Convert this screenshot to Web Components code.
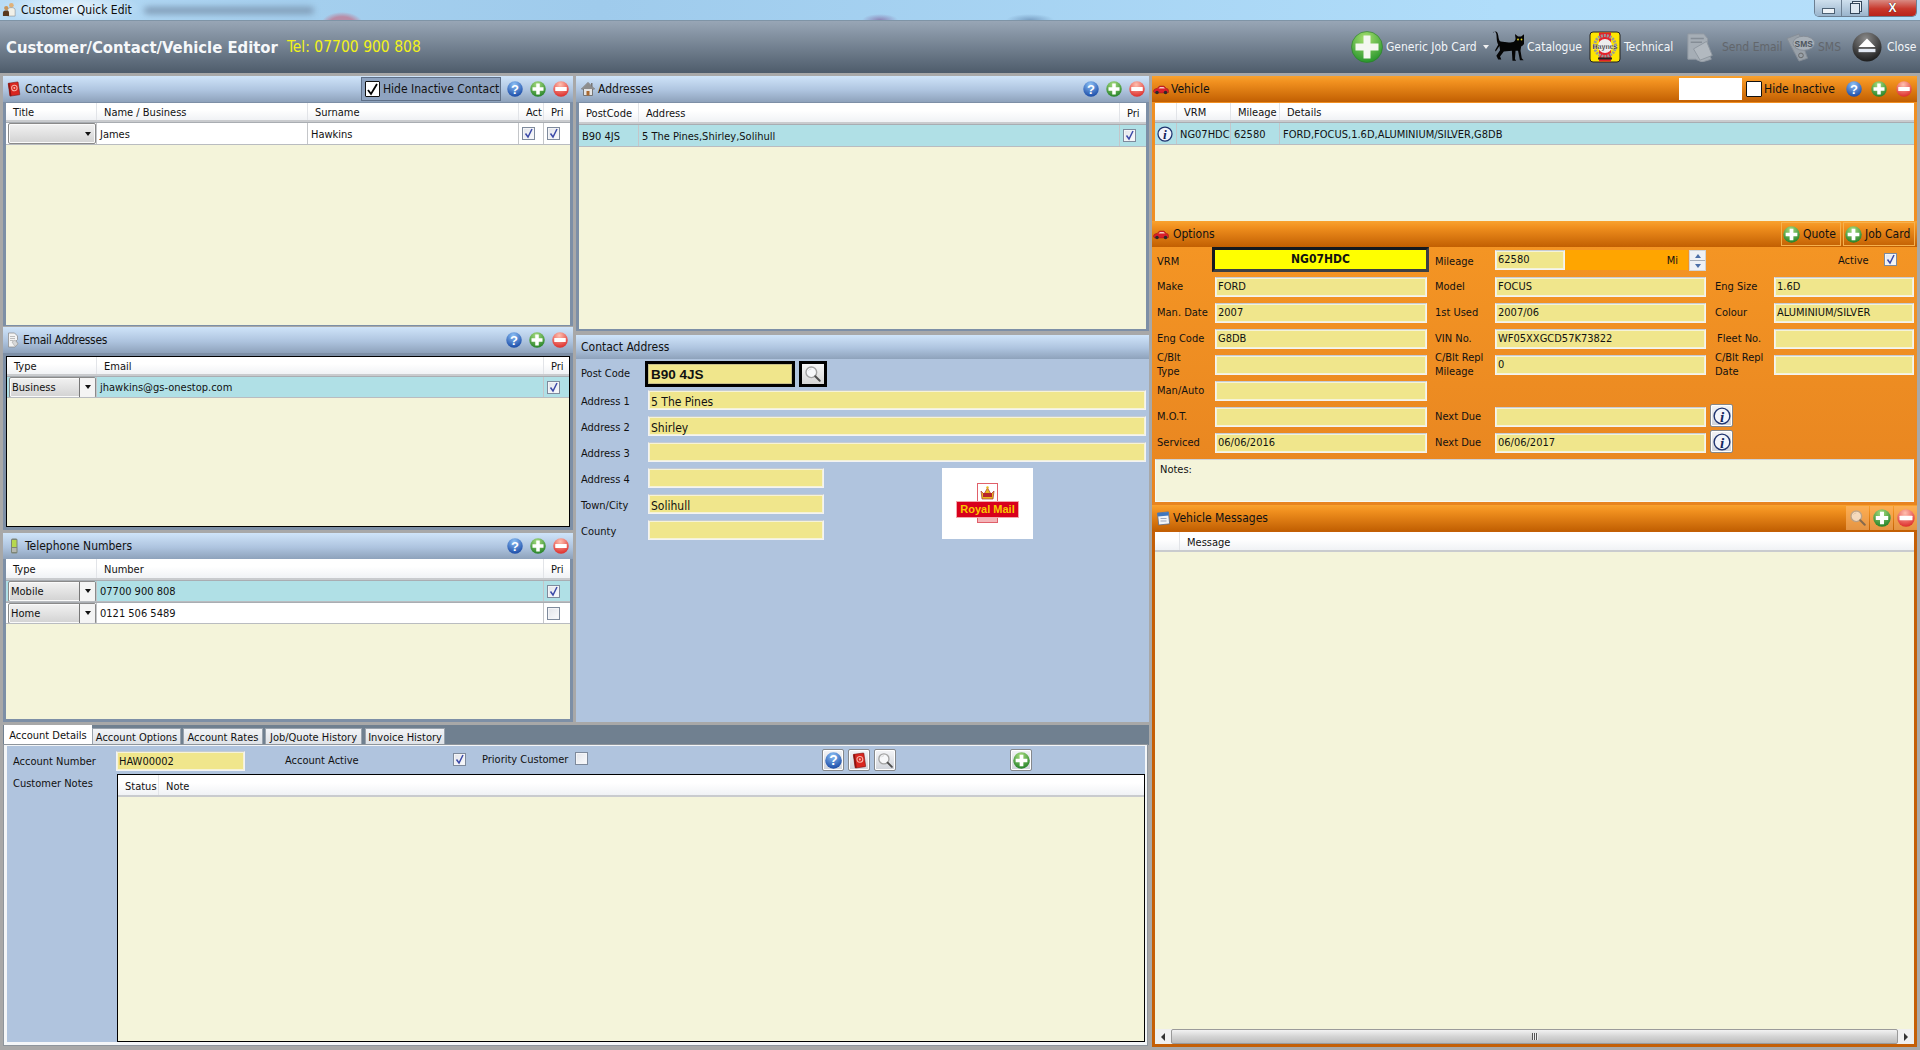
<!DOCTYPE html>
<html lang="en"><head><meta charset="utf-8"><title>Customer Quick Edit</title>
<style>
html,body{margin:0;padding:0;height:100%;overflow:hidden}
body{background:#a8a8a8;font:11px "DejaVu Sans Condensed","DejaVu Sans",sans-serif;font-stretch:condensed;color:#111}
</style></head><body>
<app-window>
  <win-titlebar heading="Customer Quick Edit"></win-titlebar>
  <app-header heading="Customer/Contact/Vehicle Editor" tel="Tel: 07700 900 808">
    <tool-item icon="bigadd" label="Generic Job Card" drop style="width:141px"></tool-item>
    <tool-item icon="cat" label="Catalogue" style="width:97px"></tool-item>
    <tool-item icon="haynes" label="Technical" style="width:97px"></tool-item>
    <tool-item icon="sendmail" label="Send Email" muted style="width:99px" gap="6"></tool-item>
    <tool-item icon="sms" label="SMS" muted style="width:67px"></tool-item>
    <tool-item icon="eject" label="Close" style="width:62px" gap="5"></tool-item>
  </app-header>
  <app-main>
    <left-block>
      <panel-stack>
        <dock-panel heading="Contacts" icon="book" title-x="3" title-gap="3" style="height:250px" pad="1px 3px 1px">
          <hide-toggle slot="actions" label="Hide Inactive Contact"></hide-toggle>
          <crud-buttons slot="actions"></crud-buttons>
          <data-grid cols="91px 211px 211px 25px 26px">
            <grid-row head><grid-cell>Title</grid-cell><grid-cell>Name / Business</grid-cell><grid-cell>Surname</grid-cell><grid-cell>Act</grid-cell><grid-cell>Pri</grid-cell></grid-row>
            <grid-row><grid-cell><combo-box></combo-box></grid-cell><grid-cell>James</grid-cell><grid-cell>Hawkins</grid-cell><grid-cell><check-box checked></check-box></grid-cell><grid-cell><check-box checked></check-box></grid-cell></grid-row>
          </data-grid>
        </dock-panel>
        <dock-panel heading="Email Addresses" icon="doc" title-x="2" title-gap="2" title-ls="-.3" style="height:203px;margin-top:1px" pad="3px 3px 3px">
          <crud-buttons slot="actions" style="margin-right:5px"></crud-buttons>
          <data-grid black cols="90px 447px 25px">
            <grid-row head><grid-cell>Type</grid-cell><grid-cell>Email</grid-cell><grid-cell>Pri</grid-cell></grid-row>
            <grid-row selected style="height:22px"><grid-cell><combo-box value="Business" split></combo-box></grid-cell><grid-cell>jhawkins@gs-onestop.com</grid-cell><grid-cell><check-box checked></check-box></grid-cell></grid-row>
          </data-grid>
        </dock-panel>
        <dock-panel heading="Telephone Numbers" icon="phone" title-x="3" title-gap="3" style="height:189px;margin-top:3px" pad="0 3px 3px">
          <crud-buttons slot="actions"></crud-buttons>
          <data-grid cols="91px 447px 26px">
            <grid-row head style="height:21px"><grid-cell>Type</grid-cell><grid-cell>Number</grid-cell><grid-cell>Pri</grid-cell></grid-row>
            <grid-row selected style="height:22px"><grid-cell><combo-box value="Mobile" split></combo-box></grid-cell><grid-cell>07700 900 808</grid-cell><grid-cell><check-box checked></check-box></grid-cell></grid-row>
            <grid-row style="height:22px"><grid-cell><combo-box value="Home" split></combo-box></grid-cell><grid-cell>0121 506 5489</grid-cell><grid-cell><check-box></check-box></grid-cell></grid-row>
          </data-grid>
        </dock-panel>
      </panel-stack>
      <panel-stack>
        <dock-panel heading="Addresses" icon="house" title-x="4" title-gap="2" style="height:255px" pad="1px 3px 2px">
          <crud-buttons slot="actions"></crud-buttons>
          <data-grid cols="60px 481px 26px">
            <grid-row head style="height:21px"><grid-cell>PostCode</grid-cell><grid-cell>Address</grid-cell><grid-cell>Pri</grid-cell></grid-row>
            <grid-row selected style="height:23px"><grid-cell>B90 4JS</grid-cell><grid-cell>5 The Pines,Shirley,Solihull</grid-cell><grid-cell><check-box checked></check-box></grid-cell></grid-row>
          </data-grid>
        </dock-panel>
        <dock-panel heading="Contact Address" style="height:387px;margin-top:4px;--body-bg:#b0c4de" pad="2px 0 0 5px" title-x="5" head-h="24">
          <form-grid cols="67px 176px 118px 91px 113px" rows="26px">
            <form-label>Post Code</form-label>
            <post-search value="B90 4JS" style="grid-column:2/6"></post-search>
          </form-grid>
          <form-grid cols="67px 176px 118px 91px 113px" style="margin-top:3px;--field-size:12px;--field-top:3px;--label-top:3px">
            <form-label>Address 1</form-label><text-field value="5 The Pines" style="grid-column:2/6"></text-field>
            <form-label>Address 2</form-label><text-field value="Shirley" style="grid-column:2/6"></text-field>
            <form-label>Address 3</form-label><text-field style="grid-column:2/6"></text-field>
            <form-label>Address 4</form-label><text-field></text-field><span></span><royal-mail style="grid-row:span 3"></royal-mail><span></span>
            <form-label>Town/City</form-label><text-field value="Solihull"></text-field><span></span><span></span>
            <form-label>County</form-label><text-field></text-field><span></span><span></span>
          </form-grid>
        </dock-panel>
      </panel-stack>
      <tab-view style="grid-column:1/3">
        <tab-item active>Account Details</tab-item>
        <tab-item style="width:89px">Account Options</tab-item>
        <tab-item style="width:80px;margin-left:2px">Account Rates</tab-item>
        <tab-item style="width:97px;margin-left:2px">Job/Quote History</tab-item>
        <tab-item style="width:80px;margin-left:3px">Invoice History</tab-item>
        <account-row slot="page">
          <form-label style="width:109px;padding-left:6px;height:20px;margin-top:1px">Account Number</form-label>
          <text-field value="HAW00002" style="width:129px;height:20px"></text-field>
          <form-label style="width:208px;padding-left:40px;height:20px">Account Active</form-label>
          <check-box checked style="margin-top:2px"></check-box>
          <form-label style="margin-left:16px;width:93px;height:18px">Priority Customer</form-label>
          <check-box style="margin-top:1px"></check-box>
          <icon-button icon="help" style="margin-left:234px"></icon-button>
          <icon-button icon="book" style="margin-left:4px"></icon-button>
          <icon-button icon="search" style="margin-left:4px"></icon-button>
          <icon-button icon="add" style="margin-left:114px"></icon-button>
        </account-row>
        <notes-row slot="page">
          <form-label style="width:110px;padding-left:6px;height:18px;margin-top:1px">Customer Notes</form-label>
          <data-grid black cols="41px 1fr">
            <grid-row head style="height:22px"><grid-cell>Status</grid-cell><grid-cell>Note</grid-cell></grid-row>
          </data-grid>
        </notes-row>
      </tab-view>
    </left-block>
    <right-block>
      <dock-panel tone="orange" heading="Vehicle" icon="car" title-x="1" title-gap="2" style="height:145px" pad="1px 3px 0">
        <blank-box slot="actions"></blank-box>
        <hide-toggle slot="actions" plain label="Hide Inactive"></hide-toggle>
        <crud-buttons slot="actions" style="gap:9px;margin:0 5px 0 11px"></crud-buttons>
        <data-grid cols="22px 54px 49px 1fr">
          <grid-row head><grid-cell></grid-cell><grid-cell>VRM</grid-cell><grid-cell>Mileage</grid-cell><grid-cell>Details</grid-cell></grid-row>
          <grid-row selected><grid-cell><ui-icon name="info" size="16" style="margin-left:-1px"></ui-icon></grid-cell><grid-cell>NG07HDC</grid-cell><grid-cell>62580</grid-cell><grid-cell>FORD,FOCUS,1.6D,ALUMINIUM/SILVER,G8DB</grid-cell></grid-row>
        </data-grid>
      </dock-panel>
      <dock-panel tone="orange" heading="Options" icon="car" title-x="1" title-gap="4" style="height:284px" pad="0 0 0 5px" flat>
        <orange-button slot="actions" label="Quote" style="width:60px"></orange-button>
        <orange-button slot="actions" label="Job Card" style="width:72px;margin:0 2px"></orange-button>
        <form-grid cols="58px 212px 68px 211px 68px 140px" rows="24px" style="--field-bot:2px">
          <form-label style="padding-top:5px">VRM</form-label><vrm-box value="NG07HDC"></vrm-box>
          <form-label style="padding:5px 0 0 8px">Mileage</form-label><mileage-field value="62580" unit="Mi"></mileage-field>
          <active-flag style="grid-column:5/7" label="Active"></active-flag>
          <form-label>Make</form-label><text-field value="FORD"></text-field><form-label style="padding-left:8px">Model</form-label><text-field value="FOCUS"></text-field><form-label style="padding-left:9px">Eng Size</form-label><text-field value="1.6D"></text-field>
          <form-label>Man. Date</form-label><text-field value="2007"></text-field><form-label style="padding-left:8px">1st Used</form-label><text-field value="2007/06"></text-field><form-label style="padding-left:9px">Colour</form-label><text-field value="ALUMINIUM/SILVER"></text-field>
          <form-label>Eng Code</form-label><text-field value="G8DB"></text-field><form-label style="padding-left:8px">VIN No.</form-label><text-field value="WF05XXGCD57K73822"></text-field><form-label style="padding-left:11px">Fleet No.</form-label><text-field></text-field>
          <form-label>C/Blt<br>Type</form-label><text-field></text-field><form-label style="padding-left:8px">C/Blt Repl<br>Mileage</form-label><text-field value="0"></text-field><form-label style="padding-left:9px">C/Blt Repl<br>Date</form-label><text-field></text-field>
          <form-label>Man/Auto</form-label><text-field></text-field><span></span><span></span><span></span><span></span>
          <form-label>M.O.T.</form-label><text-field></text-field><form-label style="padding-left:8px">Next Due</form-label><text-field></text-field><icon-button icon="info" big style="margin-left:4px"></icon-button><span></span>
          <form-label>Serviced</form-label><text-field value="06/06/2016"></text-field><form-label style="padding-left:8px">Next Due</form-label><text-field value="06/06/2017"></text-field><icon-button icon="info" big style="margin-left:4px"></icon-button><span></span>
        </form-grid>
        <notes-box>Notes:</notes-box>
      </dock-panel>
      <dock-panel tone="orange" dark heading="Vehicle Messages" icon="notes" title-x="3" title-gap="2" style="flex:1" pad="1px 3px 3px">
        <square-button slot="actions" icon="search" faded></square-button>
        <square-button slot="actions" icon="add"></square-button>
        <square-button slot="actions" icon="remove"></square-button>
        <data-grid cols="25px 1fr" style="flex:1">
          <grid-row head style="height:20px"><grid-cell></grid-cell><grid-cell>Message</grid-cell></grid-row>
          <h-scroll slot="foot"></h-scroll>
        </data-grid>
      </dock-panel>
    </right-block>
  </app-main>
</app-window>
<script>
const rg=(a,b)=>`<defs><radialGradient id="g" cx=".45" cy=".22" r=".9"><stop offset="0" stop-color="${a}"/><stop offset="1" stop-color="${b}"/></radialGradient></defs>`;
const ICONS={
add:`${rg('#a8dd80','#12751c')}<circle cx="16" cy="16" r="15.5" fill="url(#g)"/><path d="M12.5 5h7v7.5H27v7h-7.500V27h-7v-7.500H5v-7h7.500z" fill="#fff"/>`,
bigadd:`${rg('#a8e070','#148a22')}<circle cx="16" cy="16" r="15.5" fill="url(#g)" stroke="#2a7a2a" stroke-width=".6"/><path d="M12.500 4.500h7v8h8v7h-8v8h-7v-8h-8v-7h8z" fill="#f4f7f0"/>`,
remove:`${rg('#ffc0b0','#d81818')}<circle cx="16" cy="16" r="15.500" fill="url(#g)"/><rect x="4.500" y="12" width="23" height="8" rx="1" fill="#fff"/>`,
help:`${rg('#8cc0f5','#0a3a9c')}<circle cx="16" cy="16" r="15.500" fill="url(#g)"/><text x="16" y="25" font-family="Liberation Sans" font-weight="700" font-size="26" text-anchor="middle" fill="#fff">?</text>`,
info:`<circle cx="16" cy="16" r="14" fill="#f2f5fb" stroke="#1f3470" stroke-width="2.500"/><text x="16" y="26" font-family="Liberation Serif" font-style="italic" font-weight="700" font-size="27" text-anchor="middle" fill="#14265e">i</text>`,
book:`<g transform="rotate(-8 16 16)"><rect x="6" y="3" width="20" height="26" rx="1" fill="#d9261f" stroke="#6d0f0c"/><rect x="6" y="3" width="3" height="26" fill="#8e1411"/><circle cx="17" cy="14" r="5.500" fill="none" stroke="#f7b4a8" stroke-width="2"/><circle cx="17" cy="14" r="2" fill="#f7b4a8"/></g>`,
doc:`<path d="M7 2h12l6 6v7l-3 3 4 6-6 6H7z" fill="#f4f4f4" stroke="#8b8b8b" stroke-width="1.500"/><path d="M10 9h10M10 13h10M10 17h7" stroke="#aaa" stroke-width="1.500"/><path d="M14 20l6-4 6 8-6 5z" fill="#d8d8d8" stroke="#999"/>`,
phone:`<rect x="10" y="1" width="13" height="30" rx="3" fill="#7d8577"/><rect x="12" y="4" width="9" height="14" fill="#b6d84e"/><rect x="12" y="20" width="9" height="8" fill="#b5b8b0"/>`,
house:`<path d="M16 3L3 16h4v13h18V16h4z" fill="#e4e4e4" stroke="#6d6d6d" stroke-width="1.800"/><path d="M16 3L3 16h26z" fill="#8d8d8d"/><rect x="13" y="20" width="6" height="9" fill="#a9682f"/><rect x="22" y="4" width="3" height="7" fill="#777"/>`,
car:`<path d="M1 21c0-4 3-6 7-6l5-5h9l5 5c3 0 4 2 4 5v3l-3 1H3z" fill="#d9202a" stroke="#7a0e14" stroke-width=".8"/><path d="M11 15l3-3h7l3 3z" fill="#f4c8c0"/><circle cx="8" cy="23" r="3.500" fill="#2a2a2a"/><circle cx="25" cy="23" r="3.500" fill="#2a2a2a"/>`,
search:`<circle cx="13" cy="13" r="9.500" fill="#f7f8fa" stroke="#a3a3a3" stroke-width="2.500"/><path d="M8 10a6 6 0 0 1 5-3" fill="none" stroke="#ccc" stroke-width="1.500"/><path d="M20 20l8 8" stroke="#4f4f4f" stroke-width="3.500" stroke-linecap="round"/>`,
notes:`<rect x="6" y="5" width="22" height="24" fill="#f2f4f8" stroke="#55698c" stroke-width="1.500" transform="rotate(-6 16 16)"/><rect x="6" y="5" width="22" height="7" fill="#3f76bd" transform="rotate(-6 16 16)"/><path d="M11 17h12M11 22h12" stroke="#9aa7bd" stroke-width="2"/>`,
people:`<circle cx="20" cy="7" r="5" fill="#e0b27a"/><path d="M12 30V17c0-4 4-5 8-5s8 1 8 5v13z" fill="#f0f0e8" stroke="#777"/><circle cx="9" cy="13" r="4.500" fill="#c8955a"/><path d="M2 30V23c0-4 3-5 7-5s6 1 6 5v7z" fill="#5a3a20"/>`,
cat:`<path d="M2 3C6-1 9 1 10 7c.8 5 1 9 4 10 6 1 13 2 18 1 4 0 6-3 6-6l-1-7 5 4h5l5-4 1 8c1 6-2 10-6 12l-1 7 2 12 3 3h-6l-3-15-4 0-1 13 2 3h-6l-1-16-13 1-6 8 2 5h-5l-3-6 6-9-1-7-6 9-1-2 5-9c-3-6-2-10-3-17-.5-3-2-5-5-3z" fill="#050505" transform="scale(.62 .62)"/><circle cx="26" cy="8.500" r=".9" fill="#e6d820"/><circle cx="29.500" cy="8.500" r=".9" fill="#e6d820"/>`,
haynes:`<rect x="1" y="1" width="30" height="30" rx="3" fill="#ffe600" stroke="#222" stroke-width="1"/><rect x="10" y="1.500" width="12" height="29" fill="#e4232b"/><circle cx="16" cy="15" r="10.500" fill="none" stroke="#9a9a9a" stroke-width="3" stroke-dasharray="2 1"/><circle cx="16" cy="15" r="7" fill="#eee"/><text x="16" y="17.500" font-family="Liberation Sans" font-weight="700" font-size="8" text-anchor="middle" textLength="25" lengthAdjust="spacingAndGlyphs" fill="#000" stroke="#fff" stroke-width=".25">Haynes</text><rect x="9" y="26.500" width="14" height="2" fill="#222"/>`,
sendmail:`<path d="M2 2h17l4 5v14l4 8-10 3-7-3H2z" fill="#a6aeb6" stroke="#929aa3"/><path d="M5 7h14M5 11h12" stroke="#858d96" stroke-width="1.500"/><path d="M8 18l14-8 6 15-13 5z" fill="#b2b9c0" stroke="#8e969f"/>`,
sms:`<path d="M2 7l13-5 9 26-9 3z" fill="#98a0a8" stroke="#858d96"/><circle cx="17" cy="25" r="2.500" fill="none" stroke="#666"/><ellipse cx="20" cy="12" rx="11.500" ry="7.500" fill="#a8b0b8" stroke="#858d96"/><text x="20" y="15.500" font-family="Liberation Sans" font-weight="700" font-size="9" text-anchor="middle" fill="#4c545c">SMS</text>`,
eject:`${rg('#8a8a8a','#0c0c0c')}<circle cx="16" cy="16" r="15.500" fill="url(#g)"/><path d="M16 7l9 9H7z" fill="#fff"/><rect x="7" y="18" width="18" height="3.500" fill="#e4eaf4"/>`
};
const ce=(tag,render)=>customElements.define(tag,class extends HTMLElement{
  connectedCallback(){ if(this.shadowRoot) return; this.attachShadow({mode:'open'}).innerHTML=render(this,(a,d='')=>this.hasAttribute(a)?this.getAttribute(a):d); }
});
ce('ui-icon',(e,a)=>`<style>:host{display:inline-flex;flex:none;width:${a('size',16)}px;height:${a('size',16)}px}svg{display:block;width:100%;height:100%}</style><svg viewBox="0 0 32 32" aria-hidden="true">${ICONS[a('name')]||''}</svg>`);
ce('app-window',()=>`<style>:host{display:flex;flex-direction:column;width:1920px;height:1050px;overflow:hidden}</style><slot></slot>`);
ce('win-titlebar',(e,a)=>`<style>:host{display:flex;align-items:flex-start;height:20px;border-bottom:1px solid #7f94a6;overflow:hidden;background:
 radial-gradient(ellipse 70px 18px at 70px 8px,rgba(255,255,255,.75),transparent),
 radial-gradient(ellipse 21px 12px at 342px 24px,#b98ca6 60%,transparent 100%),
 radial-gradient(ellipse 18px 6px at 880px 20px,#8d84b4,transparent),radial-gradient(ellipse 24px 6px at 1030px 20px,#7aa0c4,transparent),
 linear-gradient(90deg,#b8dcf6 0,#a4cfee 300px,#9fcbec 600px,#b0ddfa 1500px,#b6dffa 100%)}
 .ic{margin:2px 4px 0 2px}.t{font-size:12px;line-height:20px;color:#0b0b0b}
 .blur{flex:none;width:170px;height:7px;margin:7px 0 0 12px;border-radius:4px;background:#7f9ab5;filter:blur(3px)}
 .ctl{margin-left:auto;margin-right:3px;display:flex;width:103px;height:17px;border:1px solid #6c7f92;border-top:0;border-radius:0 0 5px 5px;box-sizing:border-box;overflow:hidden}
 .b{flex:1;display:flex;align-items:center;justify-content:center;background:linear-gradient(#cfe0ee,#9ab4cc);border-right:1px solid #6c7f92;color:#223}
 .x{flex:none;width:47px;background:linear-gradient(#d98a82 0,#c8382c 55%,#b8241c);border:0;color:#fff}
 .min{width:11px;height:4px;border:1px solid #4d6174;background:#eef3f8;margin-top:5px}.max{width:8px;height:9px;border:1px solid #33465a;box-shadow:2px -2px 0 -1px #eef3f8,2px -2px 0 0 #33465a;background:#dde8f2}
 .xg{font:700 12px "Liberation Sans",sans-serif;text-shadow:0 0 1px #000}</style>
 <ui-icon class="ic" name="people" size="15"></ui-icon><span class="t">${a('heading')}</span><span class="blur"></span>
 <div class="ctl"><div class="b"><i class="min"></i></div><div class="b"><i class="max"></i></div><div class="b x"><span class="xg">X</span></div></div>`);
ce('app-header',(e,a)=>`<style>:host{display:flex;align-items:center;height:52px;padding:0 6px;background:linear-gradient(#98a6b6,#4e5c6b)}
 .h{font-size:16.500px;font-weight:700;color:#f6f8fa}.tel{font-size:15.500px;color:#f2f21a;margin-left:9px}
 .bar{margin-left:auto;display:flex;height:100%;align-items:center}</style>
 <span class="h">${a('heading')}</span><span class="tel">${a('tel')}</span><div class="bar"><slot></slot></div>`);
ce('tool-item',(e,a)=>`<style>:host{display:flex;align-items:center;flex:none;box-sizing:border-box;height:32px;color:${e.hasAttribute('muted')?'#62666b':'#f2f5f8'};font-size:12px;white-space:nowrap}
 .l{margin-left:${a('gap',3)}px}.ar{width:0;height:0;border:3px solid transparent;border-top:4px solid #f0f0f0;border-bottom:0;margin-left:6px}</style>
 <ui-icon name="${a('icon')}" size="${['sendmail','sms','eject'].includes(a('icon'))?30:32}"></ui-icon><span class="l">${a('label')}</span>${e.hasAttribute('drop')?'<span class="ar"></span>':''}`);
ce('app-main',()=>`<style>:host{flex:1;display:grid;grid-template-columns:1146px 765px;column-gap:3px;padding:3px 3px 3px;min-height:0}</style><slot></slot>`);
ce('left-block',()=>`<style>:host{display:grid;grid-template-columns:570px 573px;grid-template-rows:646px 321px;gap:3px}</style><slot></slot>`);
ce('right-block',()=>`<style>:host{display:flex;flex-direction:column;min-height:0}</style><slot></slot>`);
ce('panel-stack',()=>`<style>:host{display:flex;flex-direction:column;min-height:0}</style><slot></slot>`);
ce('dock-panel',(e,a)=>{const o=a('tone')==='orange';const dark=e.hasAttribute('dark');
 const side=o?(dark?'#c45f06':'#f08f22'):'#7d8fa6';
 return `<style>:host{display:flex;flex-direction:column;box-sizing:border-box;min-height:0;background:${o?'linear-gradient(#f49524,#e78420)':'#7d8fa6'}}
 .hd{flex:none;height:${a('head-h',26)}px;display:flex;align-items:center;padding-left:${a('title-x',3)}px;font-size:12px;background:${o?'linear-gradient(#f9a22e,#f08f1e 25%,#c15f02)':'linear-gradient(#cfe4f9,#aec4df 55%,#8ea2bb)'};color:#111}
 .tt{margin-left:${a('icon')?a('title-gap',4):0}px;letter-spacing:${a('title-ls',0)}px;white-space:nowrap}
 .ac{margin-left:auto;display:flex;align-items:center;height:100%}
 .bd{flex:1;min-height:0;display:flex;flex-direction:column;padding:${a('pad','1px 3px')};background:${o?(e.hasAttribute('flat')?'linear-gradient(#f49524,#e78420)':side):'var(--body-bg,#7d8fa6)'}}</style>
 <div class="hd">${a('icon')?`<ui-icon name="${a('icon')}" size="16"></ui-icon>`:''}<span class="tt">${a('heading')}</span><div class="ac"><slot name="actions"></slot></div></div>
 <div class="bd"><slot></slot></div>`});
ce('crud-buttons',()=>`<style>:host{display:flex;gap:7px;margin:0 4px 0 6px}</style><ui-icon name="help"></ui-icon><ui-icon name="add"></ui-icon><ui-icon name="remove"></ui-icon>`);
ce('hide-toggle',(e,a)=>{const p=e.hasAttribute('plain');return `<style>:host{display:flex;align-items:center;box-sizing:border-box;height:${p?'100%':'24px'};${p?'':'width:140px;padding-left:3px;background:#8ea3c0;border:1px solid #5f7088;'}font-size:12px;color:#111}
 .c{box-sizing:border-box;width:${p?16:15}px;height:16px;background:#fff;border:1.500px solid #111;border-radius:1px;margin-right:${p?2:3}px;${p?'margin-left:4px;':''}display:flex;align-items:center;justify-content:center}svg{width:13px;height:13px}</style>
 <span class="c">${p?'':'<svg viewBox="0 0 13 13"><path d="M2 7l3 4 6-10" fill="none" stroke="#000" stroke-width="1.800"/></svg>'}</span><span>${a('label')}</span>`});
ce('blank-box',()=>`<style>:host{display:block;width:63px;height:22px;background:#fff}</style>`);
ce('data-grid',(e,a)=>`<style>:host{flex:1;min-height:0;display:flex;flex-direction:column;--cols:${a('cols')};background:#f4f4da;box-sizing:border-box;${e.hasAttribute('black')?'border:1.500px solid #000;':''}}.sp{flex:1}</style><slot></slot><div class="sp"></div><slot name="foot"></slot>`);
ce('grid-row',e=>{const h=e.hasAttribute('head'),s=e.hasAttribute('selected');return `<style>:host{display:grid;flex:none;grid-template-columns:var(--cols);box-sizing:border-box;height:${h?'19px':'23px'};
 ${h?'background:linear-gradient(#fff 40%,#f0f2f5);border-bottom:2px solid #c9cbce;--cell-pad:7px;--cell-sep:#e2e4e8;--cell-top:2px;':`background:${s?'#b0e0e6':'#fff'};border-bottom:1px solid #b9bcc0;border-top:1px solid #a9adb2;--cell-pad:3px;--cell-sep:#c4c6c9;--cell-top:1px;`}}</style><slot></slot>`});
ce('grid-cell',()=>`<style>:host{display:flex;align-items:center;padding-left:var(--cell-pad,3px);padding-top:var(--cell-top,0);box-sizing:border-box;border-right:1px solid var(--cell-sep,#ccc);white-space:nowrap;overflow:hidden;min-width:0}:host(:last-child){border-right:0}</style><slot></slot>`);
ce('check-box',e=>`<style>:host{display:inline-flex;flex:none;box-sizing:border-box;width:13px;height:13px;margin-top:-1px;border:1px solid #7e8a9c;background:linear-gradient(135deg,#e2e4ea,#fafbfd);box-shadow:inset 0 0 0 1px #f4f5f8}svg{width:11px;height:11px}</style>${e.hasAttribute('checked')?'<svg viewBox="0 0 11 11"><path d="M2.500 5.500L5 9l4-8" fill="none" stroke="#3c4aa8" stroke-width="1.500"/></svg>':''}`);
ce('combo-box',(e,a)=>{const s=e.hasAttribute('split');return `<style>:host{display:flex;box-sizing:border-box;width:88px;height:21px;margin:-1px 0 0 -1px;border:1px solid #8a8a8a;border-radius:2px;background:linear-gradient(#f2f2f2,#d2d2d2);box-shadow:inset 0 0 0 1px #fafafa;overflow:hidden}
 .v{flex:1;display:flex;align-items:center;padding-left:2px;white-space:nowrap;font-size:11px}
 .a{flex:none;width:15px;display:flex;align-items:center;justify-content:center;${s?'background:#f4f4f4;border-left:1px solid #777;':''}}i{width:0;height:0;border:3.500px solid transparent;border-top:4px solid #111;border-bottom:0}</style>
 <span class="v">${a('value')}</span><span class="a"><i></i></span>`});
ce('text-field',(e,a)=>`<style>:host{display:flex;align-items:center;box-sizing:border-box;height:20px;min-width:0;padding:var(--field-top,0) 0 var(--field-bot,0) 2px;background:#f0e68c;border:1px solid #f3f3f3;border-top-color:#c6ccd4;box-shadow:inset 0 0 0 1px #f5f3d8;font-size:var(--field-size,11px);white-space:nowrap;color:#111}</style>${a('value')}`);
ce('form-label',()=>`<style>:host{display:flex;align-items:center;box-sizing:border-box;padding-top:var(--label-top,0);font-size:11px;line-height:14px;color:#111;white-space:nowrap;flex:none}</style><div><slot></slot></div>`);
ce('form-grid',(e,a)=>`<style>:host{display:grid;grid-template-columns:${a('cols')};grid-auto-rows:20px;row-gap:6px;${a('rows')?`grid-template-rows:${a('rows')};`:''}}</style><slot></slot>`);
ce('post-search',(e,a)=>`<style>:host{display:flex;gap:4px;height:26px;margin-left:-3px}
 .p{box-sizing:border-box;width:150px;height:26px;border:3px solid #000;background:#f0e68c;box-shadow:inset 0 0 0 1px #c8c08a;display:flex;align-items:center;padding-left:3px;font:700 13.500px "Liberation Sans",sans-serif;color:#111}
 .s{box-sizing:border-box;width:28px;height:26px;border:3px solid #000;background:linear-gradient(#f6f6f6,#d6d6d6);display:flex;align-items:center;justify-content:center}</style>
 <div class="p">${a('value')}</div><div class="s"><ui-icon name="search" size="18"></ui-icon></div>`);
ce('royal-mail',()=>`<style>:host{display:flex;flex-direction:column;align-items:center;background:#fff;position:relative;height:71px}
 .cross{position:absolute;left:35px;top:15px;width:21px;height:40px;border:1px solid #e0606a;box-sizing:border-box;background:linear-gradient(transparent 85%,#f4b4b8 85%)}
 .band{position:absolute;left:15px;top:34px;width:61px;height:15px;background:#d8001c;box-shadow:0 0 0 1px #f2a8ac;color:#f8c800;font:700 11px/15px "Liberation Sans",sans-serif;text-align:center;white-space:nowrap}
 svg{position:absolute;left:38px;top:18px;width:15px;height:14px}</style>
 <div class="cross"></div><svg viewBox="0 0 15 14"><path d="M1 5l3 3 3.500-6L11 8l3-3-1 8H2z" fill="#e8b820" stroke="#a33" stroke-width=".7"/><rect x="3" y="7" width="9" height="4" fill="#b8252a"/><circle cx="7.500" cy="1.500" r="1.200" fill="#e8b820"/></svg><div class="band">Royal Mail</div>`);
ce('tab-view',()=>`<style>:host{display:flex;flex-direction:column;min-height:0}
 .strip{flex:none;height:20px;display:flex;align-items:flex-end;background:#708090;padding-left:1px}
 .page{flex:1;box-sizing:border-box;margin:0 2px 1px 1px;border:3px solid #f4f6f8;border-top-width:1px;border-right-width:2px;background:#b0c4de;box-shadow:0 0 0 1px #8e959c;display:flex;flex-direction:column;padding-top:5px;min-height:0}</style>
 <div class="strip"><slot></slot></div><div class="page"><slot name="page"></slot></div>`);
ce('tab-item',e=>{const ac=e.hasAttribute('active');return `<style>:host{display:flex;align-items:center;justify-content:center;flex:none;box-sizing:border-box;height:${ac?'20px':'17px'};${ac?'width:88px;background:#fff;':'background:linear-gradient(#f2f4f7,#dde1e6);border:1px solid #9aa3ad;border-bottom:0;'}font-size:11px;white-space:nowrap}</style><slot></slot>`});
ce('account-row',()=>`<style>:host{display:flex;align-items:flex-start;height:20px;flex:none}</style><slot></slot>`);
ce('notes-row',()=>`<style>:host{flex:1;display:flex;margin-top:3px;min-height:0}</style><slot></slot>`);
ce('icon-button',(e,a)=>{const b=e.hasAttribute('big');return `<style>:host{display:flex;align-items:center;justify-content:center;flex:none;box-sizing:border-box;width:${b?23:22}px;height:${b?23:22}px;margin-top:${b?-3:-2}px;border:1px solid #85888c;border-radius:2px;background:linear-gradient(#f4f5f7,#cfd3da);box-shadow:inset 0 0 0 1px #fff}</style><ui-icon name="${a('icon')}" size="${b?18:17}"></ui-icon>`});
ce('orange-button',(e,a)=>`<style>:host{display:flex;align-items:center;flex:none;box-sizing:border-box;height:24px;padding-left:1px;border:1px solid #f6b14e;font-size:12px;color:#111;white-space:nowrap}span{margin-left:3px}</style><ui-icon name="add" size="17"></ui-icon><span>${a('label')}</span>`);
ce('square-button',(e,a)=>`<style>:host{display:flex;align-items:center;justify-content:center;flex:none;width:23px;height:24px;margin-left:1px;background:rgba(255,190,120,.55)}${e.hasAttribute('faded')?'ui-icon{opacity:.65}':''}</style><ui-icon name="${a('icon')}" size="18"></ui-icon>`);
ce('vrm-box',(e,a)=>`<style>:host{display:flex;align-items:center;justify-content:center;box-sizing:border-box;height:25px;margin:0 -2px 0 -3px;background:#ff0;border:3px solid #15191e;border-bottom-color:#3a3f44;border-right-color:#3a3f44;font-size:12px;font-weight:700;padding-bottom:2px;color:#111}</style>${a('value')}`);
ce('mileage-field',(e,a)=>`<style>:host{display:flex;height:21px;margin-top:3px}text-field{width:70px;height:20px;flex:none}
 .bar{width:123px;height:20px;flex:none;background:#ffa500;display:flex;align-items:center;justify-content:flex-end;padding-right:10px;box-sizing:border-box}
 .sp{flex:none;width:17px;height:21px;margin-left:1px;box-sizing:border-box;background:#fff;border:1px solid #d0d4d8;display:flex;flex-direction:column}
 .sp i{flex:1;display:flex;align-items:center;justify-content:center;background:#eef1f6}.sp i:first-child{border-bottom:1px solid #a6aeba}
 .u{width:0;height:0;border:3px solid transparent;border-bottom:4px solid #4b6fa8;border-top:0}.d{width:0;height:0;border:3px solid transparent;border-top:4px solid #4b6fa8;border-bottom:0}</style>
 <text-field value="${a('value')}"></text-field><div class="bar">${a('unit')}</div><div class="sp"><i><b class="u"></b></i><i><b class="d"></b></i></div>`);
ce('active-flag',(e,a)=>`<style>:host{display:flex;align-items:center;padding-left:132px;height:20px;margin-top:3px}span{width:46px}</style><span>${a('label')}</span><check-box checked></check-box>`);
ce('notes-box',()=>`<style>:host{display:block;box-sizing:border-box;height:43px;margin:6px 3px 0 -2px;padding:3px 4px;background:#f4f4da;border:1px solid #f8f8f0;border-top-color:#cfd2d6;font-size:11px;color:#111}</style><slot></slot>`);
ce('h-scroll',()=>`<style>:host{display:flex;flex:none;height:15px;background:#f0f0f0}
 .e{width:16px;display:flex;align-items:center;justify-content:center}.e+.e{width:24px}
 .t{flex:1;box-sizing:border-box;border:1px solid #9a9a9a;border-radius:2px;background:linear-gradient(#f2f2f2,#d4d4d4 50%,#bdbdbd);display:flex;align-items:center;justify-content:center;gap:1px}
 .t i{width:1px;height:7px;background:#555;box-shadow:1px 0 0 #eee}
 .l{border:4px solid transparent;border-right:4px solid #333;border-left:0}.r{border:4px solid transparent;border-left:4px solid #333;border-right:0}</style>
 <div class="e"><b class="l"></b></div><div class="t"><i></i><i></i><i></i></div><div class="e"><b class="r"></b></div>`);
</script>
</body></html>
